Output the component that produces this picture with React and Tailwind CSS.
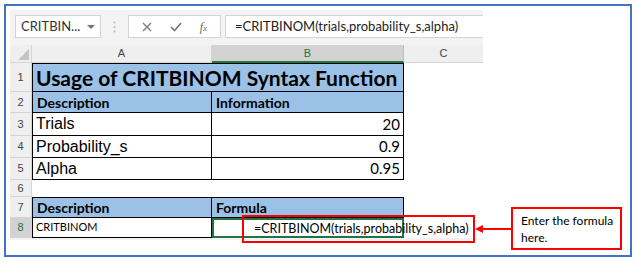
import React from 'react';

const cal = "font-['Lato','Liberation_Sans',sans-serif]";
const arial = "font-['Liberation_Sans',Arial,sans-serif]";

function RowHead({ n, h, active }) {
    return (
        <div
            className={`w-[22px] shrink-0 flex items-center justify-center border-b border-r border-[#d4d4d4] text-[11px] ${arial} ${active ? 'bg-[#d2d2d2] text-[#217346]' : 'bg-[#efefef] text-[#444]'}`}
            style={{ height: h }}
        >
            {n}
        </div>
    );
}

function Row({ n, h, active, children }) {
    return (
        <div className="flex" style={{ height: h }}>
            <RowHead n={n} h={h} active={active} />
            {children}
            <div className="w-[79px] bg-white" />
        </div>
    );
}

export default function App() {
    return (
        <div className="relative w-[637px] h-[262px] bg-white">
            <div className="absolute left-[4px] top-[4px] w-[628px] h-[253px] border-2 border-[#4472c4]" />

            <div className="absolute left-[10px] top-[10px] w-[473px] h-[230px] bg-[#f3f3f3] flex flex-col">
                {/* toolbar */}
                <div className="h-[35px] flex items-start pt-[5px] pl-[5px]">
                    <div className={`w-[86px] h-[23px] bg-white border border-[#d4d4d4] flex items-center pl-[5px] text-[13px] text-[#333] whitespace-nowrap ${cal}`}>
                        CRITBIN...
                        <span className="ml-auto mr-[5px] w-0 h-0 border-l-[4px] border-r-[4px] border-t-[4px] border-l-transparent border-r-transparent border-t-[#777]" />
                    </div>
                    <div className="w-[27px] h-[23px] flex items-center justify-center">
                        <svg width="3" height="12" viewBox="0 0 3 12">
                            <circle cx="1.5" cy="1.5" r="1" fill="#b5b5b5" />
                            <circle cx="1.5" cy="6" r="1" fill="#b5b5b5" />
                            <circle cx="1.5" cy="10.5" r="1" fill="#b5b5b5" />
                        </svg>
                    </div>
                    <div className="w-[93px] h-[23px] bg-white border border-[#d4d4d4] flex items-center justify-around px-[4px]">
                        <svg width="10" height="10" viewBox="0 0 10 10">
                            <path d="M1 1 L9 9 M9 1 L1 9" stroke="#777" strokeWidth="1.3" />
                        </svg>
                        <svg width="12" height="10" viewBox="0 0 12 10">
                            <path d="M1 5 L4.5 8.5 L11 1" stroke="#777" strokeWidth="1.6" fill="none" />
                        </svg>
                        <span className="text-[12px] italic text-[#666] font-['Liberation_Serif',serif]">f<span className="text-[9px]">x</span></span>
                    </div>
                    <div className={`ml-[4px] flex-1 h-[23px] bg-white border border-[#d4d4d4] border-r-0 flex items-center pl-[9px] text-[13px] text-[#222] whitespace-nowrap ${cal}`}>
                        =CRITBINOM(trials,probability_s,alpha)
                    </div>
                </div>

                {/* column headers */}
                <div className={`flex h-[18px] text-[11px] text-[#444] ${arial}`}>
                    <div className="w-[22px] bg-[#efefef] border-r border-b border-[#d4d4d4] relative">
                        <svg className="absolute right-[2px] bottom-[2px]" width="11" height="11" viewBox="0 0 11 11">
                            <polygon points="11,0 11,11 0,11" fill="#c4c4c4" />
                        </svg>
                    </div>
                    <div className="w-[180px] bg-[#efefef] border-r border-b border-[#d4d4d4] flex items-center justify-center">A</div>
                    <div className="w-[192px] bg-[#d2d2d2] border-r border-[#bdbdbd] border-b-2 border-b-[#217346] flex items-center justify-center text-[#217346]">B</div>
                    <div className="w-[79px] bg-[#efefef] border-b border-[#d4d4d4] flex items-center justify-center">C</div>
                </div>

                {/* rows */}
                <div className="flex flex-col">
                    <Row n="1" h={29}>
                        <div className={`w-[372px] bg-[#9bc2e6] border border-black flex items-center pl-[3px] text-[21px] font-bold text-black whitespace-nowrap overflow-hidden ${cal}`}>
                            Usage of CRITBINOM Syntax Function
                        </div>
                    </Row>
                    <Row n="2" h={21}>
                        <div className={`w-[180px] bg-[#9bc2e6] border-l border-b border-r border-black flex items-center pl-[4px] text-[14px] font-bold ${cal}`}>Description</div>
                        <div className={`w-[192px] bg-[#9bc2e6] border-b border-r border-black flex items-center pl-[4px] text-[14px] font-bold ${cal}`}>Information</div>
                    </Row>
                    <Row n="3" h={23}>
                        <div className={`w-[180px] bg-white border-l border-b border-r border-black flex items-center pl-[3px] text-[16px] ${arial}`}>Trials</div>
                        <div className={`w-[192px] bg-white border-b border-r border-black flex items-center justify-end pr-[3px] text-[15px] ${cal}`}>20</div>
                    </Row>
                    <Row n="4" h={22}>
                        <div className={`w-[180px] bg-white border-l border-b border-r border-black flex items-center pl-[3px] text-[16px] ${arial}`}>Probability_s</div>
                        <div className={`w-[192px] bg-white border-b border-r border-black flex items-center justify-end pr-[3px] text-[15px] ${cal}`}>0.9</div>
                    </Row>
                    <Row n="5" h={22}>
                        <div className={`w-[180px] bg-white border-l border-b border-r border-black flex items-center pl-[3px] text-[16px] ${arial}`}>Alpha</div>
                        <div className={`w-[192px] bg-white border-b border-r border-black flex items-center justify-end pr-[3px] text-[15px] ${cal}`}>0.95</div>
                    </Row>
                    <Row n="6" h={17}>
                        <div className="w-[372px] bg-white" />
                    </Row>
                    <Row n="7" h={21}>
                        <div className={`w-[180px] bg-[#9bc2e6] border-l border-t border-b border-r border-black flex items-center pl-[4px] text-[14px] font-bold ${cal}`}>Description</div>
                        <div className={`w-[192px] bg-[#9bc2e6] border-t border-b border-r border-black flex items-center pl-[4px] text-[14px] font-bold ${cal}`}>Formula</div>
                    </Row>
                    <Row n="8" h={20} active>
                        <div className={`w-[180px] bg-white border-l border-b border-r border-black flex items-center pl-[3px] text-[11px] ${cal}`}>CRITBINOM</div>
                        <div className="w-[192px] bg-white border-2 border-[#217346]" />
                    </Row>
                </div>
            </div>

            {/* annotation: red box over B8 */}
            <div className={`absolute left-[242px] top-[215px] w-[233px] h-[28px] border-2 border-[#ff0000] flex items-center pl-[10px] text-[12.5px] text-black whitespace-nowrap ${cal}`}>
                =CRITBINOM(trials,probability_s,alpha)
            </div>

            {/* arrow */}
            <svg className="absolute left-[475px] top-[223px]" width="38" height="12" viewBox="0 0 38 12">
                <line x1="6" y1="6" x2="38" y2="6" stroke="#ff0000" strokeWidth="2" />
                <polygon points="0,6 8,2 8,10" fill="#ff0000" />
            </svg>

            {/* callout */}
            <div className={`absolute left-[511px] top-[207px] w-[111px] h-[43px] border-2 border-[#ff0000] bg-white pl-[8px] pt-[3px] text-[12px] leading-[17px] text-black whitespace-nowrap ${cal}`}>
                Enter the formula<br />here.
            </div>
        </div>
    );
}
